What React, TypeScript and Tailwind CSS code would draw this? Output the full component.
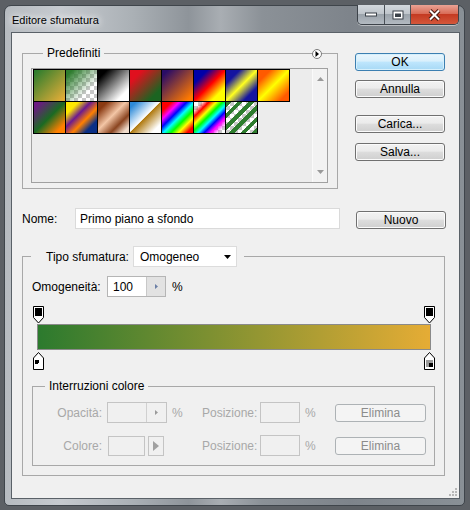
import React from 'react'

const SWATCHES: string[] = [
  'bg-[linear-gradient(135deg,#2e7d2e_5%,#e3ad38_95%)]',
  '[background:linear-gradient(135deg,#2e7d2e_10%,rgba(46,125,46,0)_70%),conic-gradient(#c8c8c8_25%,#fff_0_50%,#c8c8c8_0_75%,#fff_0)_0_0/8px_8px]',
  'bg-[linear-gradient(135deg,#000_15%,#fff_80%)]',
  'bg-[linear-gradient(135deg,#e0101e_20%,#1b6421_80%)]',
  'bg-[linear-gradient(135deg,#2a0c66_10%,#ff7a00_90%)]',
  'bg-[linear-gradient(135deg,#0000a8_22%,#ff0000_50%,#ffff00_78%)]',
  'bg-[linear-gradient(135deg,#1414a0_22%,#ffff20_50%,#1414a0_78%)]',
  'bg-[linear-gradient(135deg,#ff5a00_20%,#ffff00_50%,#ff5a00_85%)]',
  'bg-[linear-gradient(135deg,#6c1a82_10%,#1b6a22_50%,#ff8000_85%)]',
  'bg-[linear-gradient(135deg,#ffe800_20%,#6c1a90_40%,#ff8000_60%,#0a2f86_80%)]',
  'bg-[linear-gradient(135deg,#8a3a12_15%,#f3c6a6_45%,#8a4420_70%,#f0dccc_90%)]',
  'bg-[linear-gradient(135deg,#2d8ad8_10%,#ffffff_48%,#b07a10_50%,#ffffff_85%)]',
  'bg-[linear-gradient(135deg,#ff0000_15%,#ff00ff_28%,#0000ff_40%,#00ffff_52%,#00ff00_64%,#ffff00_76%,#ff0000_90%)]',
  '[background:linear-gradient(135deg,rgba(255,0,0,0)_12%,#ff0000_24%,#ffff00_36%,#00ff00_46%,#00ffff_56%,#0000ff_66%,#ff00ff_76%,rgba(255,0,255,0)_90%),conic-gradient(#c8c8c8_25%,#fff_0_50%,#c8c8c8_0_75%,#fff_0)_0_0/8px_8px]',
  '[background:repeating-linear-gradient(135deg,#2e7d2e_0_4px,transparent_4px_8px),conic-gradient(#c8c8c8_25%,#fff_0_50%,#c8c8c8_0_75%,#fff_0)_0_0/8px_8px]'
]

const BTN =
  'h-[18px] w-[90px] rounded-[3px] border border-[#707070] bg-[linear-gradient(#f2f2f2,#ebebeb_45%,#dddddd_50%,#cfcfcf)] shadow-[inset_0_0_0_1px_#fbfbfb] text-[12px] leading-none text-black'

const BTN_OK =
  'h-[18px] w-[90px] rounded-[3px] border border-[#3c7fb1] bg-[linear-gradient(#eaf6fd,#d9f0fc_45%,#bee6fd_50%,#a7d9f5)] shadow-[inset_0_0_0_1px_#d6f0fc] text-[12px] leading-none text-black'

const BTN_OFF =
  'h-[18px] w-[91px] rounded-[3px] border border-[#adb2b5] bg-[#f4f4f4] text-[12px] leading-none text-[#8c8c8c]'

function OpacityStop(): React.JSX.Element {
  return (
    <svg width="11" height="18" viewBox="0 0 11 18">
      <path d="M0.5 0.5h10v11l-5 5.5l-5-5.5z" fill="#fff" stroke="#000" />
      <rect x="2" y="2" width="7" height="8" fill="#000" />
    </svg>
  )
}

function ColorStop({ back }: { back?: boolean }): React.JSX.Element {
  return (
    <svg width="11" height="18" viewBox="0 0 11 18">
      <path d="M5.5 0.5l5 5.5v11.5h-10v-11.5z" fill="#fff" stroke="#000" />
      <rect x="2" y="8" width="7" height="7" fill={back ? '#9a9a9a' : '#fff'} />
      <rect x="2" y="8" width="4" height="4" fill={back ? '#9a9a9a' : '#000'} />
      <rect x="5" y="11" width="4" height="4" fill={back ? '#000' : '#fff'} />
    </svg>
  )
}

function StopRow({ children }: { children: React.ReactNode }): React.JSX.Element {
  return <div className="flex justify-between">{children}</div>
}

export default function App(): React.JSX.Element {
  return (
    <div className="w-[470px] h-[510px] bg-[#5c6065] pt-[5px] pl-[4px] font-['Liberation_Sans',Arial,sans-serif] text-[12px] leading-[14px] text-black">
      <div className="w-[461px] h-[501px] flex flex-col rounded-t-[7px] rounded-b-[5px] border border-[#3f454b] bg-[linear-gradient(90deg,#b6bbc0_0%,#c6cacf_12%,#aab0b5_28%,#8e949a_40%,#a9aeb3_47%,#8b9197_56%,#7e848b_75%,#899096_100%)]">
        {/* title bar */}
        <div className="h-[26px] flex justify-between">
          <div className="pl-[7px] pt-[7px] text-[11px] [text-shadow:0_0_6px_#fff,0_0_10px_#fff]">
            Editore sfumatura
          </div>
          <div className="flex h-[20px] -mt-px mr-[5px] rounded-b-[5px] border border-t-0 border-[#3d434a] overflow-hidden shadow-[0_1px_0_rgba(255,255,255,0.45)]">
            <div className="w-[27px] flex items-center justify-center border-r border-[#4a5057] bg-[linear-gradient(#d3d8dd,#c0c6cc_45%,#9ba3ab_50%,#b3bac1)]">
              <svg width="12" height="5" viewBox="0 0 12 5">
                <rect x="0.5" y="1" width="11" height="3" fill="#fff" stroke="#3a4148" />
              </svg>
            </div>
            <div className="w-[26px] flex items-center justify-center border-r border-[#4a5057] bg-[linear-gradient(#d3d8dd,#c0c6cc_45%,#9ba3ab_50%,#b3bac1)]">
              <svg width="12" height="10" viewBox="0 0 12 10">
                <rect x="0.5" y="0.5" width="11" height="9" fill="#3a4148" />
                <rect x="1.5" y="1.5" width="9" height="7" fill="#fff" />
                <rect x="3" y="3.5" width="6" height="3.5" fill="#3a4148" />
              </svg>
            </div>
            <div className="w-[47px] flex items-center justify-center bg-[linear-gradient(#eaa395,#d96d58_45%,#c43a22_50%,#d4573a)]">
              <svg width="13" height="12" viewBox="0 0 13 12">
                <path d="M2 1.5l9 9M11 1.5l-9 9" stroke="#4a1a14" strokeWidth="4" />
                <path d="M2 1.5l9 9M11 1.5l-9 9" stroke="#fff" strokeWidth="2" />
              </svg>
            </div>
          </div>
        </div>

        {/* client area */}
        <div className="relative flex-1 ml-[6px] mr-[4px] mb-[6px] border border-[#5a6168] bg-[#f0f0f0]">
          <div className="flex pt-[13px] pl-[10px]">
            <fieldset className="relative w-[316px] border border-[#a8a8a8] px-[8px] pb-[5px]">
              <legend className="ml-[12px] px-[4px] leading-[14px]">Predefiniti</legend>
              <button className="absolute right-[15px] -top-[11px] w-[10px] h-[10px] rounded-full border border-[#7a7a7a] bg-white flex items-center justify-center">
                <svg width="4" height="6" viewBox="0 0 4 6">
                  <path d="M0.5 0l3.5 3l-3.5 3z" fill="#000" />
                </svg>
              </button>
              <div className="mt-[8px] w-[297px] h-[115px] flex border border-[#a0a0a0] bg-[#ececec]">
                <div className="flex-1 pl-px">
                  <div className="grid grid-cols-[repeat(8,32px)] auto-rows-[32px]">
                    {SWATCHES.map((cls, i) => (
                      <div key={i} className={'w-[33px] h-[33px] border border-black ' + cls} />
                    ))}
                  </div>
                </div>
                <div className="w-[15px] flex flex-col items-center justify-between py-[8px] border-l border-[#fafafa] bg-[#f2f2f2]">
                  <svg width="7" height="4" viewBox="0 0 7 4">
                    <path d="M0 4l3.5-4l3.5 4z" fill="#9a9a9a" />
                  </svg>
                  <svg width="7" height="4" viewBox="0 0 7 4">
                    <path d="M0 0l3.5 4l3.5-4z" fill="#9a9a9a" />
                  </svg>
                </div>
              </div>
            </fieldset>

            <div className="ml-[17px] pt-[7px] flex flex-col">
              <button className={BTN_OK}>OK</button>
              <button className={BTN + ' mt-[9px]'}>Annulla</button>
              <button className={BTN + ' mt-[17px]'}>Carica...</button>
              <button className={BTN + ' mt-[10px]'}>Salva...</button>
            </div>
          </div>

          <div className="flex items-end mt-[19px] pl-[10px]">
            <div className="w-[53px] self-center">Nome:</div>
            <div className="w-[265px] h-[21px] flex items-center pl-[4px] border border-[#dadada] bg-white">
              Primo piano a sfondo
            </div>
            <button className={BTN + ' ml-[16px]'}>Nuovo</button>
          </div>

          <fieldset className="mt-[17px] ml-[10px] w-[423px] border border-[#a8a8a8] pb-[9px]">
            <legend className="ml-[8px] pl-[15px] pr-[7px]">
              <div className="flex items-center">
                <span>Tipo sfumatura:</span>
                <div className="ml-[4px] w-[104px] h-[21px] flex items-center justify-between pl-[6px] pr-[5px] border border-[#dcdcdc] bg-white">
                  <span>Omogeneo</span>
                  <svg width="7" height="4" viewBox="0 0 7 4">
                    <path d="M0 0h7l-3.5 4z" fill="#000" />
                  </svg>
                </div>
              </div>
            </legend>

            <div className="flex items-center mt-[9px] pl-[9px]">
              <span className="w-[75px]">Omogeneità:</span>
              <div className="w-[59px] h-[21px] flex border border-[#b5b5b5] bg-white">
                <span className="flex-1 pl-[5px] self-center">100</span>
                <div className="w-[19px] flex items-center justify-center border-l border-[#c8c8c8] bg-[#e2e2e2]">
                  <svg width="3" height="5" viewBox="0 0 3 5">
                    <path d="M0 0l3 2.5l-3 2.5z" fill="#6b7fa6" />
                  </svg>
                </div>
              </div>
              <span className="ml-[6px]">%</span>
            </div>

            <div className="mt-[9px] ml-[10px] w-[402px]">
              <StopRow>
                <OpacityStop />
                <OpacityStop />
              </StopRow>
              <div className="mx-[4px] h-[26px] border border-[#8a8a8a] bg-[linear-gradient(90deg,#2c7a2e,#e5ac35)]" />
              <div className="mt-[2px]">
                <StopRow>
                  <ColorStop />
                  <ColorStop back />
                </StopRow>
              </div>
            </div>

            <fieldset className="mt-[9px] ml-[9px] w-[403px] border border-[#a8a8a8] pb-[9px] text-[#a8a8a8]">
              <legend className="ml-[12px] px-[4px] text-black">Interruzioni colore</legend>

              <div className="flex items-center mt-[9px]">
                <span className="w-[69px] text-right">Opacità:</span>
                <div className="ml-[5px] w-[60px] h-[21px] flex border border-[#c4c4c4] bg-[#f0f0f0]">
                  <span className="flex-1" />
                  <div className="w-[20px] flex items-center justify-center border-l border-[#d0d0d0]">
                    <svg width="3" height="5" viewBox="0 0 3 5">
                      <path d="M0 0l3 2.5l-3 2.5z" fill="#9a9a9a" />
                    </svg>
                  </div>
                </div>
                <span className="ml-[5px] w-[30px]">%</span>
                <span className="w-[58px]">Posizione:</span>
                <div className="w-[40px] h-[21px] border border-[#c4c4c4] bg-[#f0f0f0]" />
                <span className="ml-[5px] w-[30px]">%</span>
                <button className={BTN_OFF}>Elimina</button>
              </div>

              <div className="flex items-center mt-[12px]">
                <span className="w-[69px] text-right">Colore:</span>
                <div className="ml-[6px] w-[37px] h-[20px] border border-[#c4c4c4] bg-[#f0f0f0]" />
                <div className="ml-[3px] w-[16px] h-[20px] flex items-center justify-center border border-[#c4c4c4] bg-[#f0f0f0]">
                  <svg width="6" height="10" viewBox="0 0 6 10">
                    <path d="M0 0l6 5l-6 5z" fill="#a0a0a0" />
                  </svg>
                </div>
                <span className="w-[38px]" />
                <span className="w-[58px]">Posizione:</span>
                <div className="w-[40px] h-[21px] border border-[#c4c4c4] bg-[#f0f0f0]" />
                <span className="ml-[5px] w-[30px]">%</span>
                <button className={BTN_OFF}>Elimina</button>
              </div>
            </fieldset>
          </fieldset>

          <svg className="absolute right-[2px] bottom-[2px]" width="9" height="9" viewBox="0 0 9 9">
            <rect x="7" y="1" width="2" height="2" fill="#b8b8b8" />
            <rect x="4" y="4" width="2" height="2" fill="#b8b8b8" />
            <rect x="7" y="4" width="2" height="2" fill="#b8b8b8" />
            <rect x="1" y="7" width="2" height="2" fill="#b8b8b8" />
            <rect x="4" y="7" width="2" height="2" fill="#b8b8b8" />
            <rect x="7" y="7" width="2" height="2" fill="#b8b8b8" />
          </svg>
        </div>
      </div>
    </div>
  )
}
